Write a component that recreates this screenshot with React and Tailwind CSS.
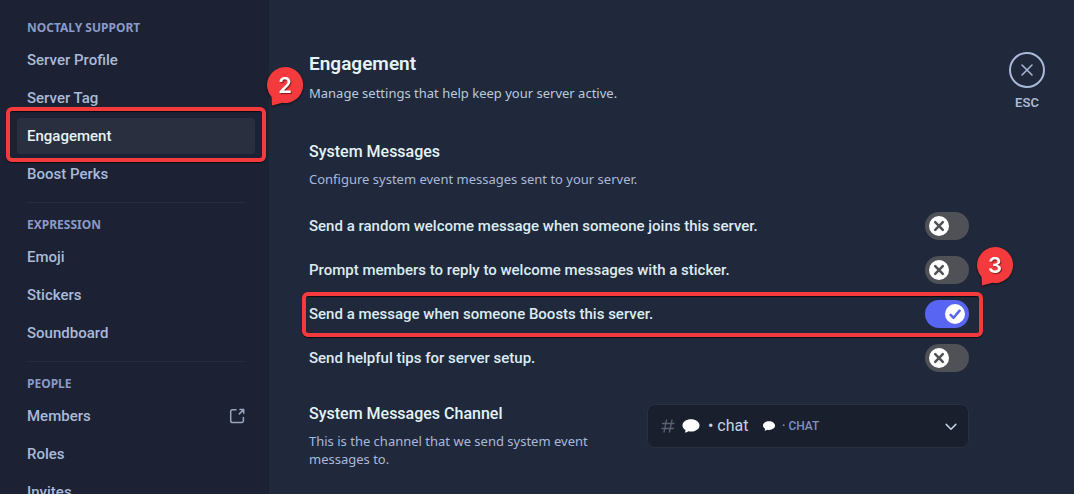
import React, { useState } from "react";

const sections = [
  {
    title: "Noctaly Support",
    items: [
      { name: "Server Profile" },
      { name: "Server Tag" },
      { name: "Engagement", marked: true },
      { name: "Boost Perks" },
    ],
  },
  {
    title: "Expression",
    items: [{ name: "Emoji" }, { name: "Stickers" }, { name: "Soundboard" }],
  },
  {
    title: "People",
    items: [{ name: "Members", external: true }, { name: "Roles" }, { name: "Invites" }],
  },
];

const initialToggles = [
  { id: "welcome", label: "Send a random welcome message when someone joins this server.", on: false },
  { id: "sticker", label: "Prompt members to reply to welcome messages with a sticker.", on: false },
  { id: "boost", label: "Send a message when someone Boosts this server.", on: true, marked: true },
  { id: "tips", label: "Send helpful tips for server setup.", on: false },
];

// Red speech bubble with a step number
function StepBubble({ number, className }) {
  return (
    <div className={`pointer-events-none absolute z-10 h-10 w-9 drop-shadow-[0_1px_1px_rgba(0,0,0,0.6)] ${className}`}>
      <svg viewBox="0 0 36 40" className="absolute inset-0 h-full w-full" aria-hidden="true">
        <path d="M18 0a18 18 0 1 1-2.600 35.800L5 38.400 4.600 30A18 18 0 0 1 18 0z" fill="#f43a3c" />
      </svg>
      <span className="relative block text-center font-['Inter',sans-serif] text-[22px] leading-9 font-semibold text-white [text-shadow:1px_1px_1px_rgba(0,0,0,0.5)]">
        {number}
      </span>
    </div>
  );
}

function MarkFrame({ className }) {
  return (
    <div
      className={`pointer-events-none absolute rounded-md border-4 border-[#f43a3c] shadow-[0_1px_1px_rgba(0,0,0,0.7),inset_0_1px_1px_rgba(0,0,0,0.7)] ${className}`}
    />
  );
}

function ExternalIcon() {
  return (
    <svg viewBox="0 0 16 16" className="h-4 w-4 text-[#9aa6bf]" fill="none" stroke="currentColor" strokeWidth="1.500" strokeLinecap="round" strokeLinejoin="round" aria-hidden="true">
      <path d="M7 1.800H3.500A1.800 1.800 0 0 0 1.700 3.600v9.100a1.800 1.800 0 0 0 1.800 1.800h9.100a1.800 1.800 0 0 0 1.800-1.800V9.500" />
      <path d="M11 1.500h3.700v3.700M14.500 1.700L10.300 5.900" />
    </svg>
  );
}

function ChatBubble({ className }) {
  return (
    <svg viewBox="0 0 18 14" className={className} fill="#ffffff" aria-hidden="true">
      <path d="M9 0.300c4.700 0 8.500 2.700 8.500 6.100s-3.800 6.100-8.500 6.100c-.9 0-1.800-.1-2.600-.3-1 .8-2.200 1.300-3.600 1.400.5-.8.800-1.700.700-2.600C1.600 9.900.5 8.200.5 6.400.5 3 4.300.3 9 .3z" />
    </svg>
  );
}

function Toggle({ id, checked, onChange }) {
  return (
    <span className="relative h-7 w-11 shrink-0">
      <input
        id={id}
        type="checkbox"
        role="switch"
        checked={checked}
        onChange={onChange}
        className="block h-7 w-11 cursor-pointer appearance-none rounded-full bg-[#4f5157] checked:bg-[#5865f2]"
      />
      <span
        className={`pointer-events-none absolute top-1 flex h-5 w-5 items-center justify-center rounded-full bg-white ${checked ? "right-1" : "left-1"}`}
      >
        <svg viewBox="0 0 20 20" className="h-5 w-5" fill="none" strokeWidth="2.500" strokeLinecap="round" strokeLinejoin="round" aria-hidden="true">
          {checked ? (
            <path d="M5.600 10.800l3 3L14.600 6.600" stroke="#5865f2" />
          ) : (
            <path d="M6.200 6.200l7.600 7.600M13.800 6.200l-7.600 7.600" stroke="#4f5157" />
          )}
        </svg>
      </span>
    </span>
  );
}

function Sidebar({ active, onSelect }) {
  return (
    <nav className="relative z-10 w-[269px] shrink-0 bg-[#1c2133] pt-5 pr-3.5 pl-[17px]">
      {sections.map((section, i) => (
        <div key={section.title}>
          {i > 0 && <hr className="mx-2.5 mt-2.5 mb-3.5 border-[#272c3e]" />}
          <h2 className="mb-1.5 px-2.5 font-['Noto_Sans',sans-serif] text-xs leading-4 font-bold text-[#8a9ac6] uppercase">
            {section.title}
          </h2>
          <ul className="flex flex-col gap-0.5">
            {section.items.map(item => (
              <li key={item.name} className="relative">
                <button
                  type="button"
                  onClick={() => onSelect(item.name)}
                  className={`flex h-9 w-full items-center justify-between rounded px-2.5 text-left text-[15px] font-medium ${
                    active === item.name ? "bg-[#2a2f3f] text-[#e3f3f6]" : "text-[#a9bad8]"
                  }`}
                >
                  {item.name}
                  {item.external && <ExternalIcon />}
                </button>
                {item.marked && (
                  <>
                    <MarkFrame className="-top-[11px] -right-[11px] -bottom-2 -left-[11px]" />
                    <StepBubble number="2" className="-top-[51px] -right-12" />
                  </>
                )}
              </li>
            ))}
          </ul>
        </div>
      ))}
    </nav>
  );
}

export default function App() {
  const [active, setActive] = useState("Engagement");
  const [toggles, setToggles] = useState(initialToggles);
  const [channel, setChannel] = useState("chat");

  function flip(id) {
    setToggles(toggles.map(t => (t.id === id ? { ...t, on: !t.on } : t)));
  }

  return (
    <div className="flex h-screen overflow-hidden bg-[#20283b] font-['Roboto',sans-serif]">
      <Sidebar active={active} onSelect={setActive} />

      <main className="flex min-w-0 flex-1 items-start gap-10 pt-[52px] pr-[29px] pl-10">
        <div className="min-w-0 flex-1">
          <h1 className="text-[19px] leading-6 font-semibold text-[#e3f3f6]">Engagement</h1>
          <p className="mt-2 font-['Noto_Sans',sans-serif] text-[13px] leading-[18px] text-[#b9cbdc]">
            Manage settings that help keep your server active.
          </p>

          <h2 className="mt-10 text-base leading-5 font-medium text-[#e3f3f6]">System Messages</h2>
          <p className="mt-2 font-['Noto_Sans',sans-serif] text-[13px] leading-[18px] text-[#a9b9da]">
            Configure system event messages sent to your server.
          </p>

          <div className="mt-6 flex flex-col gap-4">
            {toggles.map(t => (
              <div key={t.id} className="relative flex items-center justify-between gap-4">
                <label htmlFor={t.id} className="text-[15px] leading-5 font-medium text-[#dcecf1]">
                  {t.label}
                </label>
                <Toggle id={t.id} checked={t.on} onChange={() => flip(t.id)} />
                {t.marked && (
                  <>
                    <MarkFrame className="-top-2 -right-3.5 -bottom-[9px] -left-[7px]" />
                    <StepBubble number="3" className="-top-[53px] -right-11" />
                  </>
                )}
              </div>
            ))}
          </div>

          <div className="mt-8 flex items-start gap-4">
            <div className="flex-1">
              <label htmlFor="channel" className="block text-base leading-5 font-medium text-[#e3f3f6]">
                System Messages Channel
              </label>
              <p className="mt-2 font-['Noto_Sans',sans-serif] text-[13px] leading-[18px] text-[#a9b9da]">
                This is the channel that we send system event messages to.
              </p>
            </div>
            <div className="relative flex-1">
              <select
                id="channel"
                value={channel}
                onChange={e => setChannel(e.target.value)}
                className="h-11 w-full appearance-none rounded-lg border border-[#2a3041] bg-[#1a1f2e] pl-[60px] text-base text-[#c3d3e4]"
              >
                <option value="chat">• chat</option>
              </select>
              <div className="pointer-events-none absolute inset-y-0 left-3.5 flex items-center">
                <svg viewBox="0 0 14 16" className="h-4 w-3.5" fill="none" stroke="#5a6070" strokeWidth="1.300" strokeLinecap="round" aria-hidden="true">
                  <path d="M5.500 2L3 14M11 2L8.500 14M1.500 5.500H13M1 10.500h11.500" />
                </svg>
                <ChatBubble className="ml-[7px] h-3.5 w-[18px]" />
              </div>
              <div className="pointer-events-none absolute inset-y-0 left-[115px] flex items-center gap-1.5 text-xs font-medium text-[#7f90c4]">
                <ChatBubble className="h-2.5 w-3.5" />
                <span>· CHAT</span>
              </div>
              <svg viewBox="0 0 12 8" className="pointer-events-none absolute top-[19px] right-3 h-2 w-3" fill="none" stroke="#c3d3e4" strokeWidth="1.500" strokeLinecap="round" strokeLinejoin="round" aria-hidden="true">
                <path d="M1.200 1.400L6 6.200l4.800-4.800" />
              </svg>
            </div>
          </div>
        </div>

        <div className="flex w-9 flex-col items-center gap-[7px]">
          <button
            type="button"
            aria-labelledby="esc-label"
            className="flex h-9 w-9 items-center justify-center rounded-full border-2 border-[#a9bad8] text-[#a9bad8]"
          >
            <svg viewBox="0 0 12 12" className="h-3 w-3" fill="none" stroke="currentColor" strokeWidth="1.500" strokeLinecap="round" aria-hidden="true">
              <path d="M1 1l10 10M11 1L1 11" />
            </svg>
          </button>
          <span id="esc-label" className="text-[13px] leading-4 font-semibold text-[#a9bad8]">ESC</span>
        </div>
      </main>
    </div>
  );
}
